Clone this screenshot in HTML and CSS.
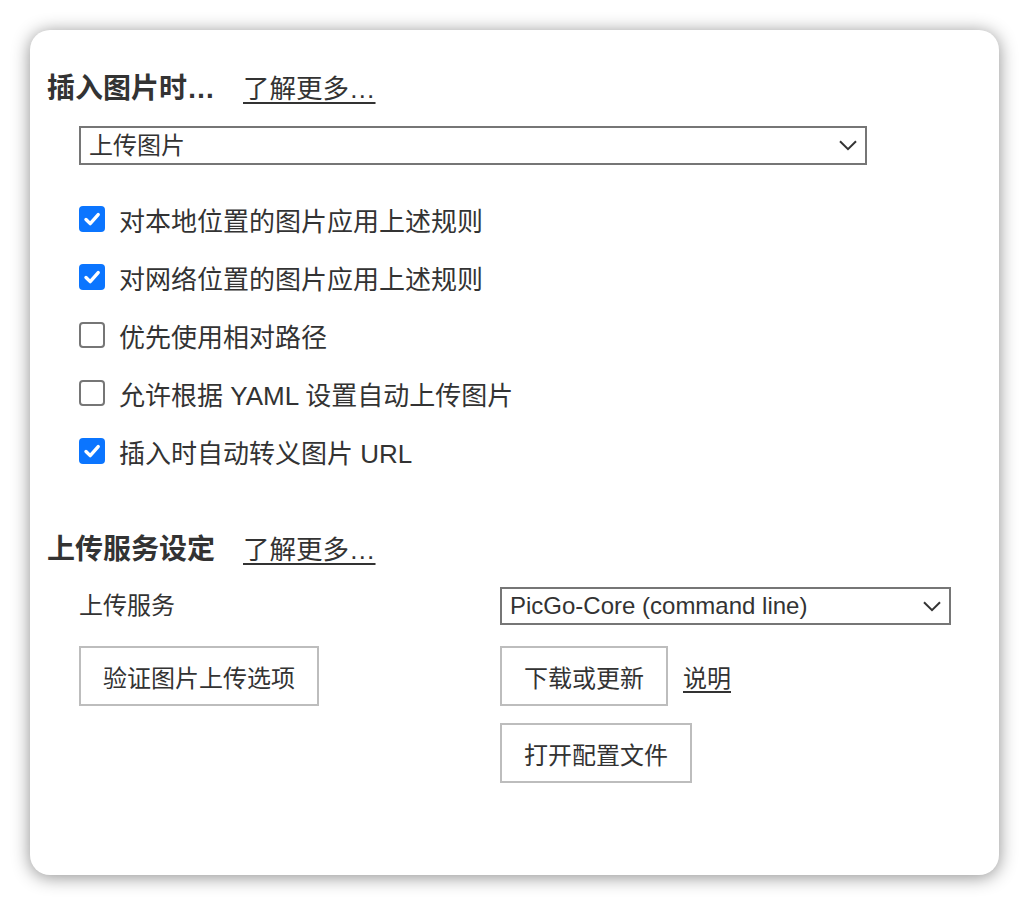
FILE: index.html
```html
<!DOCTYPE html>
<html lang="zh-CN">
<head>
<meta charset="utf-8">
<title>图片设置</title>
<link rel="stylesheet" href="styles.css">
</head>
<body>
<div class="card">
  <div class="heading">
    <span class="title">插入图片时…</span>
    <a class="more" href="#">了解更多…</a>
  </div>
  <div class="select select-wide">
    <span class="value">上传图片</span>
    <svg class="chev" width="18" height="11" viewBox="0 0 18 11"><path d="M1 1.2 L9 9.2 L17 1.2" fill="none" stroke="#333" stroke-width="2"/></svg>
  </div>
  <div class="checks">
    <label class="check"><span class="box on"><svg viewBox="0 0 26 26" width="26" height="26"><path d="M7 13.5 L11.2 17.6 L19.2 8.6" fill="none" stroke="#fff" stroke-width="3.4" stroke-linecap="round" stroke-linejoin="round"/></svg></span>对本地位置的图片应用上述规则</label>
    <label class="check"><span class="box on"><svg viewBox="0 0 26 26" width="26" height="26"><path d="M7 13.5 L11.2 17.6 L19.2 8.6" fill="none" stroke="#fff" stroke-width="3.4" stroke-linecap="round" stroke-linejoin="round"/></svg></span>对网络位置的图片应用上述规则</label>
    <label class="check"><span class="box off"></span>优先使用相对路径</label>
    <label class="check"><span class="box off"></span>允许根据 YAML 设置自动上传图片</label>
    <label class="check"><span class="box on"><svg viewBox="0 0 26 26" width="26" height="26"><path d="M7 13.5 L11.2 17.6 L19.2 8.6" fill="none" stroke="#fff" stroke-width="3.4" stroke-linecap="round" stroke-linejoin="round"/></svg></span>插入时自动转义图片 URL</label>
  </div>
  <div class="heading heading2">
    <span class="title">上传服务设定</span>
    <a class="more" href="#">了解更多…</a>
  </div>
  <div class="grid">
    <div class="label">上传服务</div>
    <div class="select select-service">
      <span class="value">PicGo-Core (command line)</span>
      <svg class="chev" width="18" height="11" viewBox="0 0 18 11"><path d="M1 1.2 L9 9.2 L17 1.2" fill="none" stroke="#333" stroke-width="2"/></svg>
    </div>
    <div class="cell"><button class="btn">验证图片上传选项</button></div>
    <div class="cell stack">
      <div class="row"><button class="btn">下载或更新</button><a class="help" href="#">说明</a></div>
      <div class="row"><button class="btn">打开配置文件</button></div>
    </div>
  </div>
</div>
</body>
</html>
```

FILE: styles.css
```css
html, body {
  margin: 0;
  padding: 0;
  background: #ffffff;
}
body {
  font-family: "Liberation Sans", "Noto Sans CJK SC", sans-serif;
  color: #333333;
  padding: 30px;
  width: 969px;
}
.card {
  box-sizing: border-box;
  width: 969px;
  height: 845px;
  background: #ffffff;
  border-radius: 20px;
  box-shadow: 0 2px 18px rgba(0, 0, 0, 0.45);
  padding: 41px 48px 0 17px;
}
.heading {
  display: flex;
  align-items: center;
  height: 36px;
  line-height: 36px;
  gap: 28px;
}
.title {
  font-size: 28px;
  font-weight: bold;
  color: #333;
}
.more {
  font-size: 26.5px;
  color: #333;
  text-decoration: underline;
  text-underline-offset: 4px;
  text-decoration-thickness: 2px;
}
.select {
  box-sizing: border-box;
  display: flex;
  align-items: center;
  justify-content: space-between;
  border: 2px solid #767676;
  background: #fff;
  font-size: 24px;
  color: #333;
  padding: 0 8px 0 8px;
}
.select-wide {
  margin: 19px 0 0 32px;
  width: 788px;
  height: 39px;
}
.select-service {
  height: 38px;
}
.select .value {
  line-height: 34px;
}
.chev {
  display: block;
}
.checks {
  margin: 25px 0 0 32px;
  display: flex;
  flex-direction: column;
}
.check {
  display: flex;
  align-items: center;
  height: 58px;
  gap: 14px;
  font-size: 26px;
  color: #333;
}
.box {
  box-sizing: border-box;
  width: 26px;
  height: 26px;
  border-radius: 4px;
  flex: none;
  display: block;
}
.box svg {
  display: block;
}
.box.on {
  background: #0b75ff;
}
.box.off {
  border: 2px solid #767676;
  background: #fff;
}
.heading2 {
  margin-top: 52px;
}
.grid {
  margin: 19px 0 0 32px;
  display: grid;
  grid-template-columns: 421px 451px;
  row-gap: 21px;
}
.label {
  font-size: 24px;
  line-height: 38px;
  color: #333;
}
.stack {
  display: flex;
  flex-direction: column;
  gap: 17px;
}
.row {
  display: flex;
  align-items: center;
  gap: 15px;
}
.btn {
  box-sizing: border-box;
  height: 60px;
  padding: 0 22px;
  border: 2px solid #bdbdbd;
  background: #fff;
  font-family: "Liberation Sans", "Noto Sans CJK SC", sans-serif;
  font-size: 24px;
  color: #333;
}
.help {
  font-size: 24px;
  color: #333;
  text-decoration: underline;
  text-underline-offset: 4px;
  text-decoration-thickness: 2px;
}
```
